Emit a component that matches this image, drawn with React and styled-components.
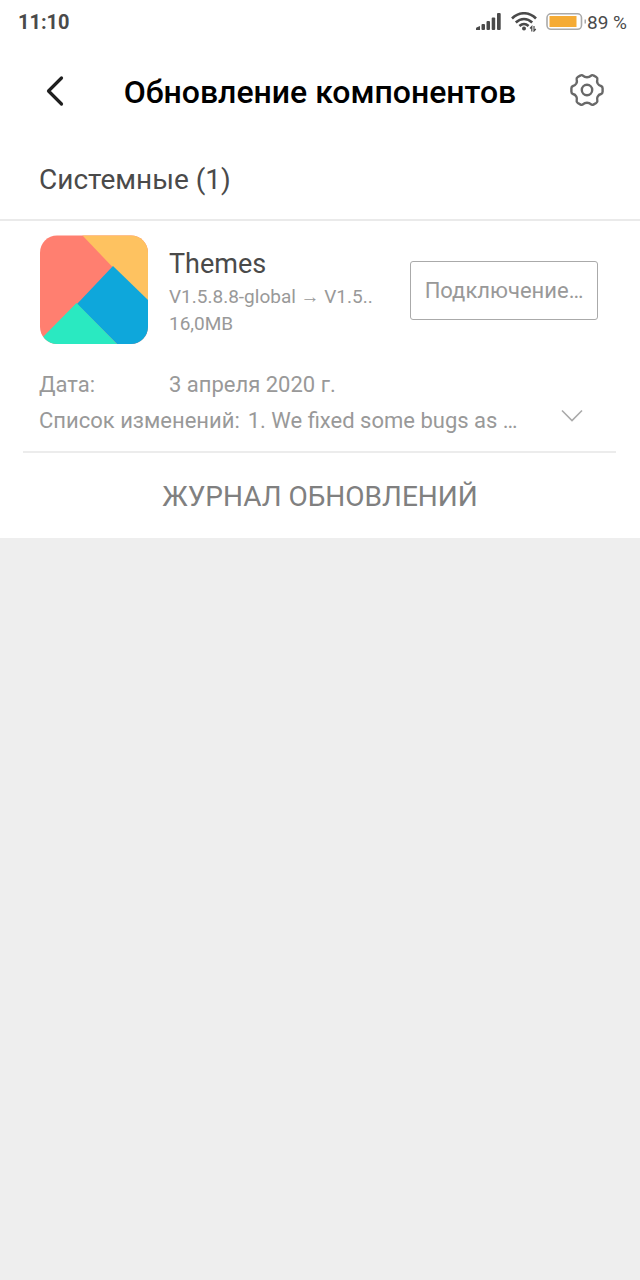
import React, { useState } from "react";
import styled, { createGlobalStyle } from "styled-components";

const Global = createGlobalStyle`
    * {
        box-sizing: border-box;
    }

    body {
        margin: 0;
        background: #eeeeee;
        color: #4a4a4a;
        font-family: Roboto, "Noto Sans", sans-serif;
    }

    button {
        padding: 0;
        border: 0;
        background: none;
        color: inherit;
        font: inherit;
        cursor: pointer;
    }

    svg {
        display: block;
    }
`;

const Screen = styled.div`
    background: #ffffff;
`;

const StatusBar = styled.div`
    display: flex;
    align-items: center;
    justify-content: space-between;
    height: 44px;
    padding: 0 13px 0 18px;
    color: #4a4a4a;
`;

const Clock = styled.time`
    font-size: 20px;
    font-weight: 700;
`;

const StatusIcons = styled.div`
    display: flex;
    align-items: center;
    gap: 9px;
`;

const Battery = styled.div`
    display: flex;
    align-items: center;
    gap: 1px;
    font-size: 19px;
`;

const Header = styled.header`
    display: flex;
    align-items: center;
    justify-content: space-between;
    height: 94px;
    padding: 0 34px;
`;

const IconButton = styled.button`
    display: flex;
    align-items: center;
    justify-content: center;
    width: 40px;
    height: 40px;
`;

const Title = styled.h1`
    margin: 0;
    padding-top: 2px;
    color: #000000;
    font-size: 32px;
    font-weight: 500;
    line-height: 40px;
`;

const SectionTitle = styled.h2`
    margin: 0;
    padding: 22px 39px 19px;
    border-bottom: 2px solid #eaeaea;
    font-size: 28px;
    font-weight: 400;
    line-height: 40px;
`;

const Component = styled.article`
    margin: 0 24px 0 23px;
    padding: 14px 16px 12px;
    border-bottom: 2px solid #ececec;
    color: #999999;
`;

const Summary = styled.div`
    display: flex;
    align-items: center;
    gap: 20px;
    padding-right: 2px;
`;

const Info = styled.div`
    flex: 1;
    min-width: 0;
    padding-top: 2px;
`;

const Name = styled.h3`
    margin: 0;
    color: #4a4a4a;
    font-size: 27px;
    font-weight: 400;
    line-height: 38px;
`;

const Meta = styled.div`
    font-size: 19px;
    line-height: 27px;
    white-space: nowrap;
`;

const ConnectButton = styled.button`
    width: 188px;
    height: 59px;
    border: 1px solid #aaaaaa;
    border-radius: 3px;
    font-size: 22px;
`;

const Details = styled.dl`
    margin: 22px 0 0;
    font-size: 22px;
    line-height: 36px;
`;

const Row = styled.div`
    display: flex;
    align-items: center;
`;

const Label = styled.dt`
    min-width: ${(props) => (props.$wide ? "130px" : "0")};
    margin-right: ${(props) => (props.$wide ? "0" : "8px")};
`;

const Value = styled.dd`
    flex: 1;
    min-width: 0;
    margin: 0;
    white-space: ${(props) => (props.$open ? "normal" : "nowrap")};
`;

const ExpandButton = styled.button`
    display: flex;
    align-items: flex-start;
    justify-content: center;
    width: 56px;
    height: 36px;
    padding-top: 6px;
`;

const LogButton = styled.button`
    display: block;
    width: 100%;
    height: 85px;
    padding-top: 2px;
    color: #808080;
    font-size: 28px;
`;

const SignalIcon = () => (
    <svg width="26" height="18" viewBox="0 0 26 18" fill="#4a4a4a">
        <path d="M0 17v-1.500q0-1 1-1.200l3-1.300v4z" />
        <rect x="5.500" y="11" width="3.500" height="6" rx="1" />
        <rect x="10.500" y="8" width="3.500" height="9" rx="1" />
        <rect x="15.700" y="4.500" width="3.500" height="12.500" rx="1" />
        <rect x="21" y="0" width="3.700" height="17" rx="1" />
    </svg>
);

const WifiIcon = () => (
    <svg width="26" height="20" viewBox="0 0 26 20" fill="none" stroke="#4a4a4a">
        <path d="M1 6.500C8-.5 18-.5 25 6.500" strokeWidth="2.600" />
        <path d="M4.800 10.500c5-4.600 11.400-4.600 16.400 0" strokeWidth="2.600" />
        <path d="M8.400 14c3-2.600 6.200-2.600 9.200 0" strokeWidth="2.600" />
        <circle cx="13" cy="16.500" r="2" fill="#4a4a4a" stroke="none" />
        <path d="M20.800 19.500v-5l-1.800 2M23 14v5l1.800-2" strokeWidth="1.200" />
    </svg>
);

const BatteryIcon = () => (
    <svg width="40" height="18" viewBox="0 0 40 18">
        <rect x="1" y="0.800" width="34.500" height="15.500" rx="4" fill="none" stroke="#aaaaaa" strokeWidth="1.600" />
        <rect x="3.500" y="3" width="27" height="11" fill="#f5ab35" />
        <rect x="38.500" y="6.500" width="1.500" height="4" fill="#aaaaaa" />
    </svg>
);

const BackIcon = () => (
    <svg width="40" height="40" viewBox="0 0 40 40" fill="none" stroke="#1f1f1f" strokeWidth="3.200">
        <path d="M27.500 7L14.500 20L27.500 33" strokeLinecap="round" strokeLinejoin="round" />
    </svg>
);

const GearIcon = () => (
    <svg width="40" height="40" viewBox="-1 1 40 40" fill="none" stroke="#686868" strokeWidth="2.400">
        <path
            strokeLinejoin="round"
            d="M16.200 5.800Q17.600 7.200 20 7.200Q22.400 7.200 23.800 5.800Q25 4.600 26.800 5.600L29.200 7Q30.800 8 30.300 9.700Q29.700 11.500 30.700 13.500Q31.800 15.500 34 16Q35.600 16.500 35.600 18.200V21.800Q35.600 23.500 34 24Q31.800 24.500 30.700 26.500Q29.700 28.500 30.300 30.300Q30.800 32 29.200 33L26.800 34.400Q25 35.400 23.800 34.200Q22.400 32.800 20 32.800Q17.600 32.800 16.200 34.200Q15 35.400 13.200 34.400L10.800 33Q9.200 32 9.700 30.300Q10.300 28.500 9.300 26.500Q8.200 24.500 6 24Q4.400 23.500 4.400 21.800V18.200Q4.400 16.500 6 16Q8.200 15.500 9.300 13.500Q10.300 11.500 9.700 9.700Q9.200 8 10.800 7L13.200 5.600Q15 4.600 16.200 5.800Z"
        />
        <circle cx="20" cy="20" r="5.200" />
    </svg>
);

const ThemesIcon = () => (
    <svg width="110" height="110" viewBox="0 0 110 110">
        <clipPath id="tile">
            <rect x="1" y="0.500" width="108" height="108.500" rx="17" />
        </clipPath>
        <g clipPath="url(#tile)">
            <rect width="110" height="110" fill="#ff7f70" />
            <path d="M43 0H110V67L73.500 32Z" fill="#fec260" />
            <path d="M74 31L110 66V110H79L38 69Z" fill="#0ea7db" />
            <path d="M37.500 68L79 110H-4Z" fill="#2ae9c1" />
        </g>
    </svg>
);

const ChevronIcon = () => (
    <svg width="24" height="14" viewBox="0 0 24 14" fill="none" stroke="#aaaaaa" strokeWidth="1.600">
        <path d="M2 1.500L12 11.500L22 1.500" />
    </svg>
);

const changes = "1. We fixed some bugs as usual.";

const App = () => {
    const [open, setOpen] = useState(false);

    return (
        <Screen>
            <Global />
            <StatusBar>
                <Clock>11:10</Clock>
                <StatusIcons>
                    <SignalIcon />
                    <WifiIcon />
                    <Battery>
                        <BatteryIcon />
                        <span>89 %</span>
                    </Battery>
                </StatusIcons>
            </StatusBar>
            <Header>
                <IconButton aria-label="Назад">
                    <BackIcon />
                </IconButton>
                <Title>Обновление компонентов</Title>
                <IconButton aria-label="Настройки">
                    <GearIcon />
                </IconButton>
            </Header>
            <main>
                <SectionTitle>Системные (1)</SectionTitle>
                <Component>
                    <Summary>
                        <ThemesIcon />
                        <Info>
                            <Name>Themes</Name>
                            <Meta>V1.5.8.8-global → V1.5..</Meta>
                            <Meta>16,0MB</Meta>
                        </Info>
                        <ConnectButton>Подключение…</ConnectButton>
                    </Summary>
                    <Details>
                        <Row>
                            <Label $wide>Дата:</Label>
                            <Value>3 апреля 2020 г.</Value>
                        </Row>
                        <Row>
                            <Label>Список изменений:</Label>
                            <Value $open={open}>{open ? changes : "1. We fixed some bugs as …"}</Value>
                            <ExpandButton
                                aria-label="Показать изменения"
                                aria-expanded={open}
                                onClick={() => setOpen(!open)}
                            >
                                <ChevronIcon />
                            </ExpandButton>
                        </Row>
                    </Details>
                </Component>
                <LogButton>ЖУРНАЛ ОБНОВЛЕНИЙ</LogButton>
            </main>
        </Screen>
    );
};

export default App;
